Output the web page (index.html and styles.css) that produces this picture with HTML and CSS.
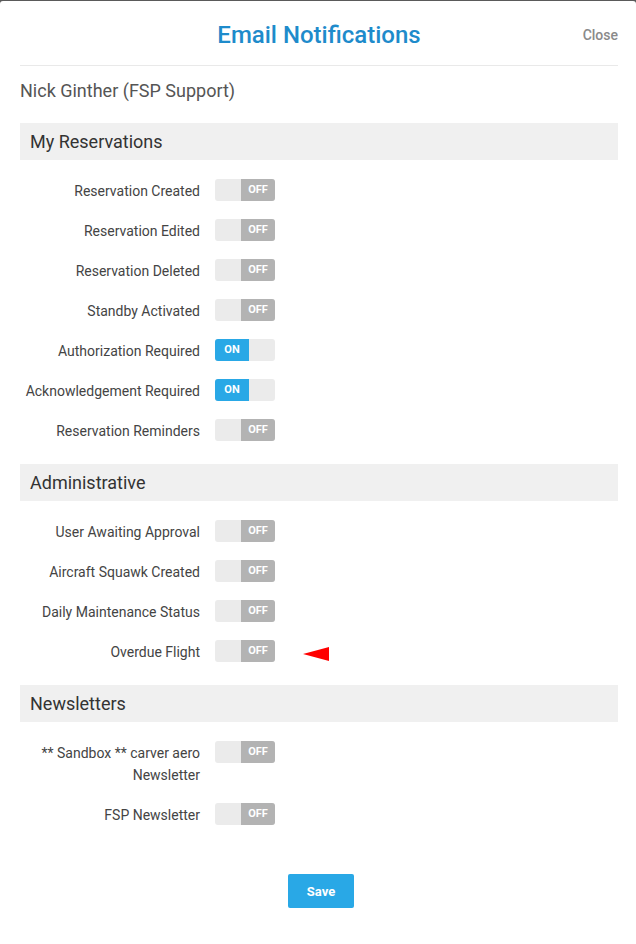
FILE: index.html
```html
<!DOCTYPE html>
<html lang="en">
<head>
  <meta charset="UTF-8">
  <meta name="viewport" content="width=device-width, initial-scale=1.0">
  <title>Email Notifications</title>
  <link rel="stylesheet" href="styles.css">
</head>
<body>
  <div class="modal">
    <div class="modal-header">
      <h1>Email Notifications</h1>
      <a class="close" href="#">Close</a>
    </div>

    <div class="modal-body">
      <div class="user-name">Nick Ginther (FSP Support)</div>

      <h2 class="section">My Reservations</h2>
      <div class="rows">
        <div class="row"><label>Reservation Created</label><span class="toggle off"><span class="track"></span><span class="state">OFF</span></span></div>
        <div class="row"><label>Reservation Edited</label><span class="toggle off"><span class="track"></span><span class="state">OFF</span></span></div>
        <div class="row"><label>Reservation Deleted</label><span class="toggle off"><span class="track"></span><span class="state">OFF</span></span></div>
        <div class="row"><label>Standby Activated</label><span class="toggle off"><span class="track"></span><span class="state">OFF</span></span></div>
        <div class="row"><label>Authorization Required</label><span class="toggle on"><span class="state">ON</span><span class="track"></span></span></div>
        <div class="row"><label>Acknowledgement Required</label><span class="toggle on"><span class="state">ON</span><span class="track"></span></span></div>
        <div class="row"><label>Reservation Reminders</label><span class="toggle off"><span class="track"></span><span class="state">OFF</span></span></div>
      </div>

      <h2 class="section">Administrative</h2>
      <div class="rows">
        <div class="row"><label>User Awaiting Approval</label><span class="toggle off"><span class="track"></span><span class="state">OFF</span></span></div>
        <div class="row"><label>Aircraft Squawk Created</label><span class="toggle off"><span class="track"></span><span class="state">OFF</span></span></div>
        <div class="row"><label>Daily Maintenance Status</label><span class="toggle off"><span class="track"></span><span class="state">OFF</span></span></div>
        <div class="row">
          <label>Overdue Flight</label><span class="toggle off"><span class="track"></span><span class="state">OFF</span></span>
          <svg class="pointer" width="26" height="14" viewBox="0 0 26 14"><polygon points="0,7 26,0 26,14" fill="#f00"/></svg>
        </div>
      </div>

      <h2 class="section">Newsletters</h2>
      <div class="rows">
        <div class="row"><label>** Sandbox ** carver aero Newsletter</label><span class="toggle off"><span class="track"></span><span class="state">OFF</span></span></div>
        <div class="row"><label>FSP Newsletter</label><span class="toggle off"><span class="track"></span><span class="state">OFF</span></span></div>
      </div>
    </div>

    <div class="modal-footer">
      <button type="button">Save</button>
    </div>
  </div>
</body>
</html>
```

FILE: styles.css
```css
body {
  margin: 0;
  background-color: #5a5a5a;
  font-family: Roboto, "Liberation Sans", sans-serif;
}
.modal {
  margin-top: 1px;
  min-height: 943px;
  background-color: #fff;
  border-radius: 3px 3px 0 0;
}
.modal-header {
  position: relative;
  height: 60px;
  padding-top: 4px;
  margin: 0 18px 0 20px;
  border-bottom: 1px solid #e9e9e9;
  display: flex;
  align-items: center;
  justify-content: center;
}
.modal-header h1 {
  margin: 0;
  font-size: 24px;
  font-weight: 500;
  color: #1e8bcb;
}
.close {
  position: absolute;
  right: 0;
  top: 26px;
  font-size: 14px;
  font-weight: 500;
  color: #8a8a8a;
  text-decoration: none;
}
.modal-body {
  padding: 0 18px 0 20px;
}
.user-name {
  margin-top: 13px;
  font-size: 18px;
  line-height: 24px;
  color: #555;
}
.section {
  margin: 0;
  height: 37px;
  line-height: 37px;
  padding: 0 10px;
  background-color: #f0f0f0;
  font-size: 18px;
  font-weight: 400;
  color: #333;
}
.user-name + .section {
  margin-top: 20px;
}
.rows {
  padding: 10px 0 14px;
}
.row {
  display: flex;
  align-items: flex-start;
  padding: 9px 0;
}
.row label {
  width: 180px;
  flex: none;
  padding-top: 1px;
  margin-bottom: -1px;
  text-align: right;
  font-size: 14px;
  line-height: 22px;
  color: #444;
}
.toggle {
  display: flex;
  width: 60px;
  height: 22px;
  margin-left: 15px;
  border-radius: 3px;
  overflow: hidden;
  background-color: #ebebeb;
}
.track {
  width: 26px;
}
.state {
  width: 34px;
  line-height: 22px;
  text-align: center;
  font-size: 11px;
  font-weight: 700;
  color: #fff;
}
.off .state {
  background-color: #b3b3b3;
}
.on .state {
  background-color: #29a8e6;
}
.pointer {
  margin: 7px 0 0 28px;
}
.modal-footer {
  padding: 26px 0 0 6px;
  text-align: center;
}
.modal-footer button {
  width: 66px;
  height: 34px;
  border: none;
  border-radius: 2px;
  background-color: #29a8e6;
  color: #fff;
  font-family: Roboto, "Liberation Sans", sans-serif;
  font-size: 13px;
  font-weight: 700;
  cursor: pointer;
}
```
